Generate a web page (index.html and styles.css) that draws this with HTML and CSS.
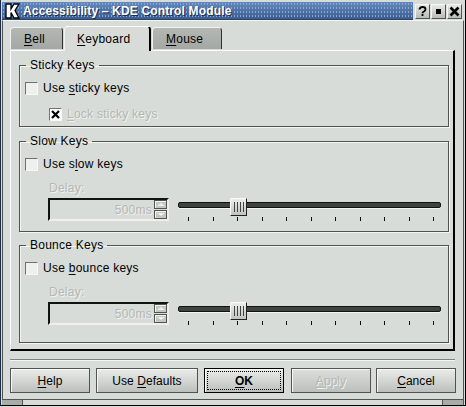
FILE: index.html
```html
<!DOCTYPE html>
<html lang="en">
<head>
    <meta charset="UTF-8">
    <title>Accessibility - KDE Control Module</title>
    <link rel="stylesheet" href="styles.css">
</head>
<body>

    <div class="window">
        <div class="titlebar">
            <div class="title">
                <svg class="kicon" width="15" height="16" viewBox="0 0 15 16">
                    <path d="M1 1h5v5l3-5h5l-4 6.500 4 7.500h-5l-3-5.500v5.500h-5z" fill="#fff" stroke="#000" stroke-width="1.300"/>
                </svg>
                <span>Accessibility – KDE Control Module</span>
            </div>
            <div class="winbtn">
                <svg width="13" height="13" viewBox="0 0 13 13"><path d="M3.500 4.500q0-2.500 3-2.500t3 2.300q0 1.500-1.500 2.200t-1.500 1.800M6.500 9v2" fill="none" stroke="#000" stroke-width="1.800"/></svg>
            </div>
            <div class="winbtn">
                <svg width="13" height="13" viewBox="0 0 13 13"><rect x="4" y="4" width="5" height="5" fill="#000"/></svg>
            </div>
            <div class="winbtn">
                <svg width="13" height="13" viewBox="0 0 13 13"><path d="M2.500 2.500l8 8M10.500 2.500l-8 8" stroke="#000" stroke-width="2.600"/></svg>
            </div>
        </div>

        <div class="client">
            <div class="tabs">
                <div class="tab tab-bell"><u>B</u>ell</div>
                <div class="tab tab-active"><u>K</u>eyboard</div>
                <div class="tab tab-mouse"><u>M</u>ouse</div>
            </div>

            <div class="pane">
                <fieldset class="group group-sticky">
                    <legend>Sticky Keys</legend>
                    <label class="check"><span class="box"></span><span>Use <u>s</u>ticky keys</span></label>
                    <label class="check check-sub disabled">
                        <span class="box box-on">
                            <svg width="9" height="9" viewBox="0 0 9 9"><path d="M1 1l7 7M8 1l-7 7" stroke="#000" stroke-width="2.200"/></svg>
                        </span><span><u>L</u>ock sticky keys</span>
                    </label>
                </fieldset>

                <fieldset class="group group-slow">
                    <legend>Slow Keys</legend>
                    <label class="check"><span class="box"></span><span>Use s<u>l</u>ow keys</span></label>
                    <div class="delay-label disabled">Delay:</div>
                    <div class="delay-row">
                        <div class="spin">
                            <span class="spin-value disabled">500ms</span>
                            <div class="spin-btns">
                                <div class="spin-btn"><i class="arrow-up"></i></div>
                                <div class="spin-btn"><i class="arrow-down"></i></div>
                            </div>
                        </div>
                        <div class="slider">
                            <div class="track-wrap">
                                <div class="track"></div>
                                <div class="handle"><b></b><b></b><b></b><b></b></div>
                            </div>
                            <div class="ticks"><i></i><i></i><i></i><i></i><i></i><i></i><i></i><i></i><i></i><i></i><i></i></div>
                        </div>
                    </div>
                </fieldset>

                <fieldset class="group group-bounce">
                    <legend>Bounce Keys</legend>
                    <label class="check"><span class="box"></span><span>Use <u>b</u>ounce keys</span></label>
                    <div class="delay-label disabled">Delay:</div>
                    <div class="delay-row">
                        <div class="spin">
                            <span class="spin-value disabled">500ms</span>
                            <div class="spin-btns">
                                <div class="spin-btn"><i class="arrow-up"></i></div>
                                <div class="spin-btn"><i class="arrow-down"></i></div>
                            </div>
                        </div>
                        <div class="slider">
                            <div class="track-wrap">
                                <div class="track"></div>
                                <div class="handle"><b></b><b></b><b></b><b></b></div>
                            </div>
                            <div class="ticks"><i></i><i></i><i></i><i></i><i></i><i></i><i></i><i></i><i></i><i></i><i></i></div>
                        </div>
                    </div>
                </fieldset>
            </div>

            <div class="separator"></div>

            <div class="buttons">
                <button class="btn btn-help"><u>H</u>elp</button>
                <button class="btn btn-defaults">Use <u>D</u>efaults</button>
                <button class="btn btn-ok"><span><u>O</u>K</span></button>
                <button class="btn btn-apply disabled"><u>A</u>pply</button>
                <button class="btn btn-cancel"><u>C</u>ancel</button>
            </div>
        </div>

        <div class="grips">
            <div class="grip"></div>
            <div class="grip-mid"></div>
            <div class="grip"></div>
        </div>
    </div>

</body>
</html>
```

FILE: styles.css
```css
html, body {
    margin: 0;
    padding: 0;
    height: 407px;
    overflow: hidden;
    background-color: #d8dcd8;
}

body {
    font-family: "Liberation Sans", Arial, sans-serif;
    font-size: 12px;
    letter-spacing: 0.25px;
    color: #000;
}

u {
    text-decoration-thickness: 1px;
    text-underline-offset: 2px;
}

.disabled {
    color: #b4b8b4;
    text-shadow: 1px 1px 0 #f0f2f0;
}

/* Window frame */
.window {
    box-sizing: border-box;
    width: 466px;
    height: 406px;
    display: flex;
    flex-direction: column;
    border: 1px solid #000;
    border-top: 0;
    border-left-color: #1c2c48;
    padding: 0 0 0 1px;
}

.titlebar {
    display: flex;
    height: 20px;
    flex: none;
    padding-right: 3px;
    background-color: #d8dcd8;
}

.title {
    flex: 1;
    display: flex;
    align-items: center;
    box-sizing: border-box;
    height: 18px;
    margin: 2px 2px 0 0;
    padding-left: 3px;
    background-color: #4f77ae;
    background-image:
        radial-gradient(circle, #8aa6cc 0.7px, transparent 0.9px),
        linear-gradient(#6289c0, #3b5c90);
    background-size: 3px 4px, 100% 100%;
    color: #fff;
    font-weight: bold;
    letter-spacing: 0.15px;
    white-space: nowrap;
    overflow: hidden;
    border-bottom: 1px solid #2c4060;
}

.kicon {
    flex: none;
}

.title span {
    margin-left: 3px;
    text-shadow: 1px 1px 0 #1c2c48;
}

.winbtn {
    flex: none;
    box-sizing: border-box;
    width: 15px;
    height: 15px;
    margin: 4px 1px 0 0;
    display: flex;
    align-items: center;
    justify-content: center;
    border: 1px solid;
    border-color: #f4f6f4 #555 #555 #f4f6f4;
    background: linear-gradient(#e6e8e6, #b8bcb8);
}

.winbtn:last-child {
    margin-right: 0;
}

.client {
    flex: 1;
    display: flex;
    flex-direction: column;
    margin-right: 1px;
    padding: 0 6px 0 7px;
    border: 1px solid;
    border-color: #f4f6f4 #505450 #505450 #505450;
    min-height: 0;
}

/* Tabs */
.tabs {
    display: flex;
    align-items: flex-end;
    height: 29px;
    flex: none;
}

.tab {
    box-sizing: border-box;
    height: 22px;
    margin-bottom: 1px;
    padding: 4px 0 0 13px;
    background: linear-gradient(#b4b8b4, #a4a8a4);
    border: 1px solid;
    border-bottom: 0;
    border-color: #f0f2f0 #303030 #000 #f0f2f0;
    border-radius: 4px 4px 0 0;
}

.tab-bell {
    width: 53px;
}

.tab-active {
    width: 87px;
    height: 25px;
    margin: 0 1px 0 1px;
    position: relative;
    top: 1px;
    padding: 5px 0 0 12px;
    background: #d8dcd8;
    border-right: 2px solid #000;
    border-top-color: #fff;
    z-index: 1;
}

.tab-mouse {
    width: 70px;
}

.pane {
    box-sizing: border-box;
    height: 301px;
    flex: none;
    width: 445px;
    display: flex;
    flex-direction: column;
    padding: 7px 6px 0 8px;
    border: 1px solid;
    border-color: #fbfcfb #000 #000 #fbfcfb;
    border-width: 1px 2px 2px 1px;
}

/* Group boxes */
.group {
    box-sizing: border-box;
    margin: 0;
    padding: 10px 0 0 5px;
    min-width: 0;
    width: 430px;
    flex: none;
    border: 1px solid #505450;
    box-shadow: inset 1px 1px 0 #f4f6f4, 1px 1px 0 #f4f6f4;
}

.group-sticky {
    height: 69px;
    margin-bottom: 7px;
}

.group-slow {
    height: 98px;
    margin-bottom: 6px;
}

.group-bounce {
    height: 105px;
}

.group legend {
    margin-left: 1px;
    padding: 0 4px;
    line-height: 14px;
}

.check {
    display: flex;
    align-items: center;
    height: 14px;
    margin-top: -1px;
}

.check-sub {
    margin: 12px 0 0 24px;
}

.box {
    box-sizing: border-box;
    flex: none;
    width: 13px;
    height: 13px;
    margin-right: 5px;
    display: flex;
    align-items: center;
    justify-content: center;
    background: #eef0ee;
    border: 1px solid;
    border-color: #707470 #f8f8f8 #f8f8f8 #707470;
}

.box-on {
    background: #fff;
}

.delay-label {
    margin: 10px 0 0 24px;
    line-height: 14px;
}

.delay-row {
    display: flex;
    margin: 3px 0 0 23px;
}

/* Spin box */
.spin {
    box-sizing: border-box;
    flex: none;
    width: 121px;
    height: 23px;
    display: flex;
    align-items: center;
    justify-content: flex-end;
    border: 2px solid;
    border-color: #101410 #eef0ee #eef0ee #101410;
}

.spin-value {
    margin-right: 2px;
}

.spin-btns {
    display: flex;
    flex-direction: column;
    gap: 1px;
}

.spin-btn {
    box-sizing: border-box;
    width: 13px;
    height: 9px;
    display: flex;
    align-items: center;
    justify-content: center;
    border: 1px solid #505450;
    box-shadow: inset 1px 1px 0 #f4f6f4;
    background: #c4c8c4;
}

.arrow-up {
    border: 4px solid transparent;
    border-top: 0;
    border-bottom: 3px solid #eef0ee;
}

.arrow-down {
    border: 4px solid transparent;
    border-bottom: 0;
    border-top: 3px solid #eef0ee;
}

/* Slider */
.slider {
    width: 263px;
    margin-left: 9px;
}

.track-wrap {
    position: relative;
    height: 18px;
    padding-top: 4px;
    box-sizing: border-box;
}

.track {
    box-sizing: border-box;
    width: 100%;
    height: 6px;
    background: #404440;
    border: 1px solid #101410;
    border-radius: 2px;
    box-shadow: 0 1px 0 #f4f6f4;
}

.handle {
    position: absolute;
    left: 52px;
    top: 0;
    box-sizing: border-box;
    width: 17px;
    height: 18px;
    display: flex;
    justify-content: center;
    gap: 2px;
    padding: 3px 0;
    background: linear-gradient(#eceeec, #c0c4c0);
    border: 1px solid;
    border-color: #f8f8f8 #202420 #202420 #f8f8f8;
}

.handle b {
    width: 1px;
    background: #404440;
}

.ticks {
    display: flex;
    justify-content: space-between;
    height: 4px;
    margin: 1px 7px 0 10px;
}

.ticks i {
    width: 1px;
    background: #000;
}

/* Bottom buttons */
.separator {
    flex: none;
    height: 1px;
    margin: 8px 0;
    width: 445px;
    background: #808480;
    box-shadow: 0 1px 0 #f4f6f4;
}

.buttons {
    display: flex;
    height: 25px;
    flex: none;
}

.btn {
    box-sizing: border-box;
    flex: none;
    width: 80px;
    height: 25px;
    margin-right: 6px;
    padding: 0;
    font: inherit;
    letter-spacing: 0.05px;
    background: linear-gradient(#eaecea, #bcc0bc);
    border: 1px solid #505450;
    box-shadow: inset 1px 1px 0 #f8f8f8;
}

.btn-defaults {
    width: 102px;
}

.btn-ok {
    margin-right: 7px;
    border-color: #000;
    font-weight: bold;
    padding: 2px;
}

.btn-ok span {
    display: flex;
    align-items: center;
    justify-content: center;
    height: 100%;
    border: 1px dotted #000;
    box-sizing: border-box;
}

.btn-apply {
    margin-right: 5px;
    background: linear-gradient(#dcdedc, #bcc0bc);
}

.btn-cancel {
    margin-right: 0;
}

.grips {
    display: flex;
    height: 5px;
    flex: none;
    margin-right: 1px;
}

.grip {
    width: 20px;
    background: #a8aca8;
    border-right: 1px solid #505450;
}

.grip-mid {
    flex: 1;
    background: #d8dcd8;
    border-right: 1px solid #505450;
}
```
